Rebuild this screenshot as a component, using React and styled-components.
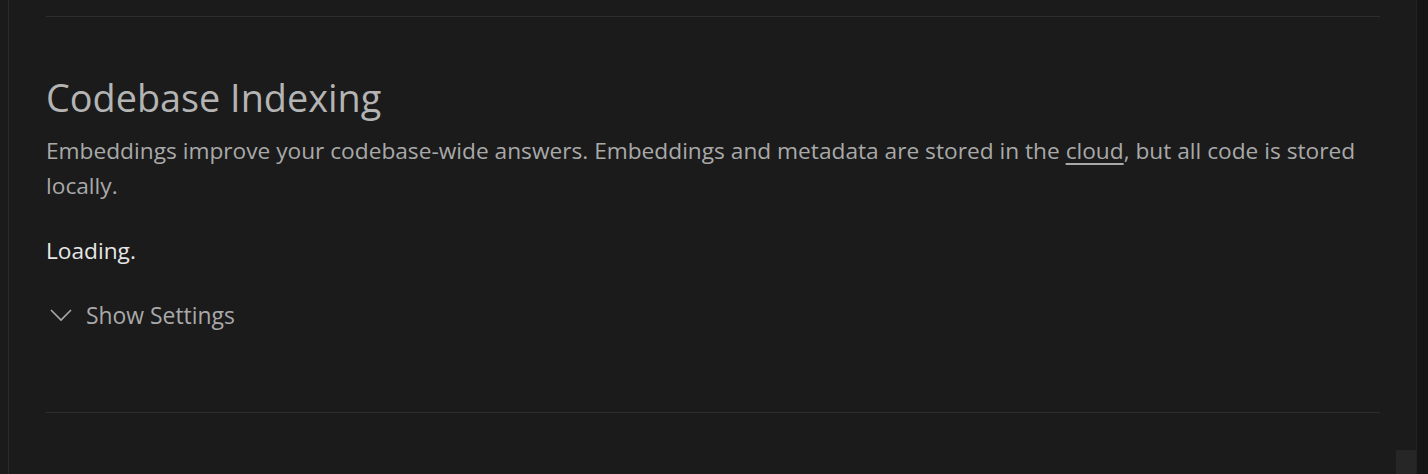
import React, { useState } from 'react';
import styled, { createGlobalStyle } from 'styled-components';

const GlobalStyle = createGlobalStyle`
  html, body {
    margin: 0;
    padding: 0;
    background: #1b1b1b;
  }
  body {
    font-family: "Open Sans", "Noto Sans", sans-serif;
    overflow: hidden;
  }
`;

const Page = styled.div`
  display: flex;
  height: 474px;
  background: #1b1b1b;
`;

const Gutter = styled.div`
  width: 8px;
  flex-shrink: 0;
  border-right: 1px solid #2b2b2b;
`;

const Main = styled.div`
  flex: 1;
  padding: 16px 36px 0 37px;
`;

const Divider = styled.hr`
  margin: 0;
  border: none;
  height: 1px;
  background: #2e2e2e;
`;

const Section = styled.section`
  padding: 56px 0 79px;
`;

const Title = styled.h2`
  margin: 0;
  font-size: 37.8px;
  font-weight: 400;
  line-height: 50px;
  color: #b4b4b4;
`;

const Description = styled.p`
  margin: 10px 0 0;
  font-size: 22.7px;
  line-height: 35px;
  color: #a9a9a9;

  a {
    color: inherit;
    text-decoration: underline;
    text-underline-offset: 4px;
  }
`;

const Status = styled.div`
  margin-top: 30px;
  font-size: 22.7px;
  line-height: 35px;
  color: #e6e6e6;
`;

const Toggle = styled.button`
  display: flex;
  align-items: center;
  gap: 14px;
  margin-top: 30px;
  padding: 0 0 0 4px;
  background: none;
  border: none;
  font-family: inherit;
  font-size: 22.9px;
  line-height: 35px;
  color: #a9a9a9;
  cursor: pointer;
`;

const Scrollbar = styled.div`
  width: 11px;
  flex-shrink: 0;
  border-left: 1px solid #222;
  background: #151515;
  position: relative;
`;

const Thumb = styled.div`
  position: absolute;
  left: -21px;
  bottom: 0;
  width: 20px;
  height: 24px;
  background: #262626;
`;

export default function App() {
  const [open, setOpen] = useState(false);
  return (
    <>
      <GlobalStyle />
      <Page>
        <Gutter />
        <Main>
          <Divider />
          <Section>
            <Title>Codebase Indexing</Title>
            <Description>
              Embeddings improve your codebase-wide answers. Embeddings and metadata are stored in the{' '}
              <a href="#cloud">cloud</a>, but all code is stored locally.
            </Description>
            <Status>Loading.</Status>
            <Toggle onClick={() => setOpen(!open)}>
              <svg width="22" height="13" viewBox="0 0 22 13" fill="none">
                <path d="M1 1l10 10L21 1" stroke="#a9a9a9" strokeWidth="1.6" />
              </svg>
              Show Settings
            </Toggle>
          </Section>
          <Divider />
        </Main>
        <Scrollbar>
          <Thumb />
        </Scrollbar>
      </Page>
    </>
  );
}
